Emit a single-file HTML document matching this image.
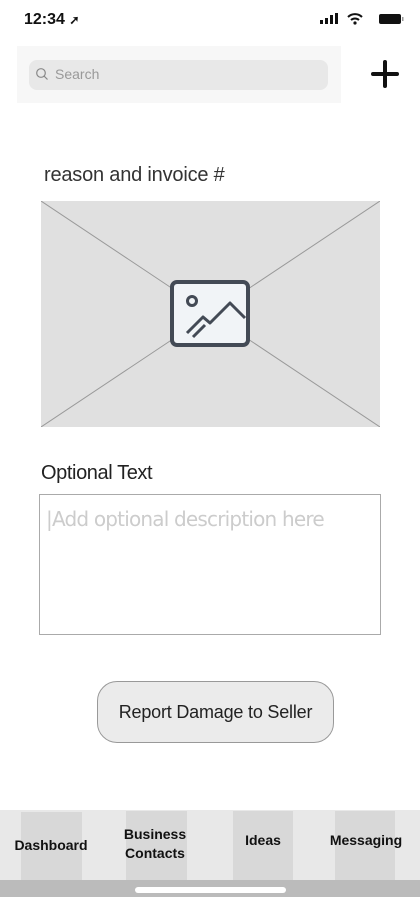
<!DOCTYPE html>
<html><head><meta charset="utf-8"><style>
*{margin:0;padding:0;box-sizing:border-box}
body{width:420px;height:897px;position:relative;background:#fff;font-family:"Liberation Sans",sans-serif;overflow:hidden;color:#111}
.a{position:absolute}
</style></head><body>
<div class="a" style="left:24px;top:11px;font-size:16px;font-weight:bold">12:34 <span style="font-size:12px">➚</span></div>
<svg class="a" style="left:320px;top:12px" width="86" height="16">
<rect x="0" y="8" width="3" height="4" fill="#111"/><rect x="5" y="6" width="3" height="6" fill="#111"/><rect x="10" y="3" width="3" height="9" fill="#111"/><rect x="15" y="1" width="3" height="11" fill="#111"/>
<path d="M28 5a10 10 0 0 1 14 0M31 8a6 6 0 0 1 8 0" stroke="#111" stroke-width="2" fill="none"/><circle cx="35" cy="11" r="1.6" fill="#111"/>
<rect x="59" y="2" width="22" height="10" rx="2" fill="#111"/><rect x="82" y="5" width="1.5" height="4" fill="#999"/>
</svg>
<div class="a" style="left:17px;top:46px;width:324px;height:57px;background:#f7f7f7"></div>
<div class="a" style="left:29px;top:60px;width:299px;height:30px;background:#e8e8e8;border-radius:8px"></div>
<svg class="a" style="left:35px;top:67px" width="14" height="14"><circle cx="6" cy="6" r="4.3" stroke="#888" stroke-width="1.2" fill="none"/><path d="M9 9l3.5 3.5" stroke="#888" stroke-width="1.2"/></svg>
<div class="a" style="left:55px;top:66px;font-size:14px;color:#999">Search</div>
<svg class="a" style="left:370px;top:60px" width="30" height="28"><path d="M15 2v24M3 14h24" stroke="#111" stroke-width="4" stroke-linecap="round"/></svg>
<div class="a" style="left:44px;top:164px;font-size:20px;color:#333;letter-spacing:-0.2px">reason and invoice #</div>
<svg class="a" style="left:41px;top:201px" width="339" height="226"><rect width="339" height="226" fill="#e0e0e0"/><path d="M0 0L339 226M339 0L0 226" stroke="#999" stroke-width="1"/>
<rect x="131" y="81" width="76" height="63" rx="5" fill="#f1f4f7" stroke="#434a55" stroke-width="4"/>
<circle cx="151" cy="100" r="4.5" fill="none" stroke="#434a55" stroke-width="3"/>
<path d="M146 132L162 116L169 122L189 102L204 117M152 136L164 124" stroke="#434a55" stroke-width="3" fill="none" stroke-linejoin="round"/>
</svg>
<div class="a" style="left:41px;top:462px;font-size:20px;color:#222;letter-spacing:-0.4px">Optional Text</div>
<div class="a" style="left:39px;top:494px;width:342px;height:141px;border:1px solid #aaa"></div>
<div class="a" style="left:46px;top:507px;font-size:20px;color:#ccc;font-family:'DejaVu Sans',sans-serif;letter-spacing:-0.8px">|Add optional description here</div>
<div class="a" style="left:97px;top:681px;width:237px;height:62px;border:1px solid #999;border-radius:20px;background:#ebebeb;font-size:18px;text-align:center;line-height:60px;letter-spacing:-0.2px;color:#222">Report Damage to Seller</div>
<div class="a" style="left:0;top:810px;width:420px;height:70px;background:#e8e8e8"></div>
<div class="a" style="left:21px;top:812px;width:61px;height:68px;background:#d8d8d8"></div>
<div class="a" style="left:126px;top:811px;width:61px;height:69px;background:#d8d8d8"></div>
<div class="a" style="left:233px;top:811px;width:60px;height:69px;background:#d8d8d8"></div>
<div class="a" style="left:335px;top:811px;width:60px;height:69px;background:#d8d8d8"></div>
<div class="a" style="left:0;top:837px;width:102px;text-align:center;font-size:14px;font-weight:bold">Dashboard</div>
<div class="a" style="left:105px;top:825px;width:100px;text-align:center;font-size:14px;font-weight:bold;line-height:19px">Business<br>Contacts</div>
<div class="a" style="left:213px;top:832px;width:100px;text-align:center;font-size:14px;font-weight:bold">Ideas</div>
<div class="a" style="left:316px;top:832px;width:100px;text-align:center;font-size:14px;font-weight:bold">Messaging</div>
<div class="a" style="left:0;top:880px;width:420px;height:17px;background:#bbb"></div>
<div class="a" style="left:135px;top:887px;width:151px;height:6px;border-radius:3px;background:#fff"></div>
</body></html>
